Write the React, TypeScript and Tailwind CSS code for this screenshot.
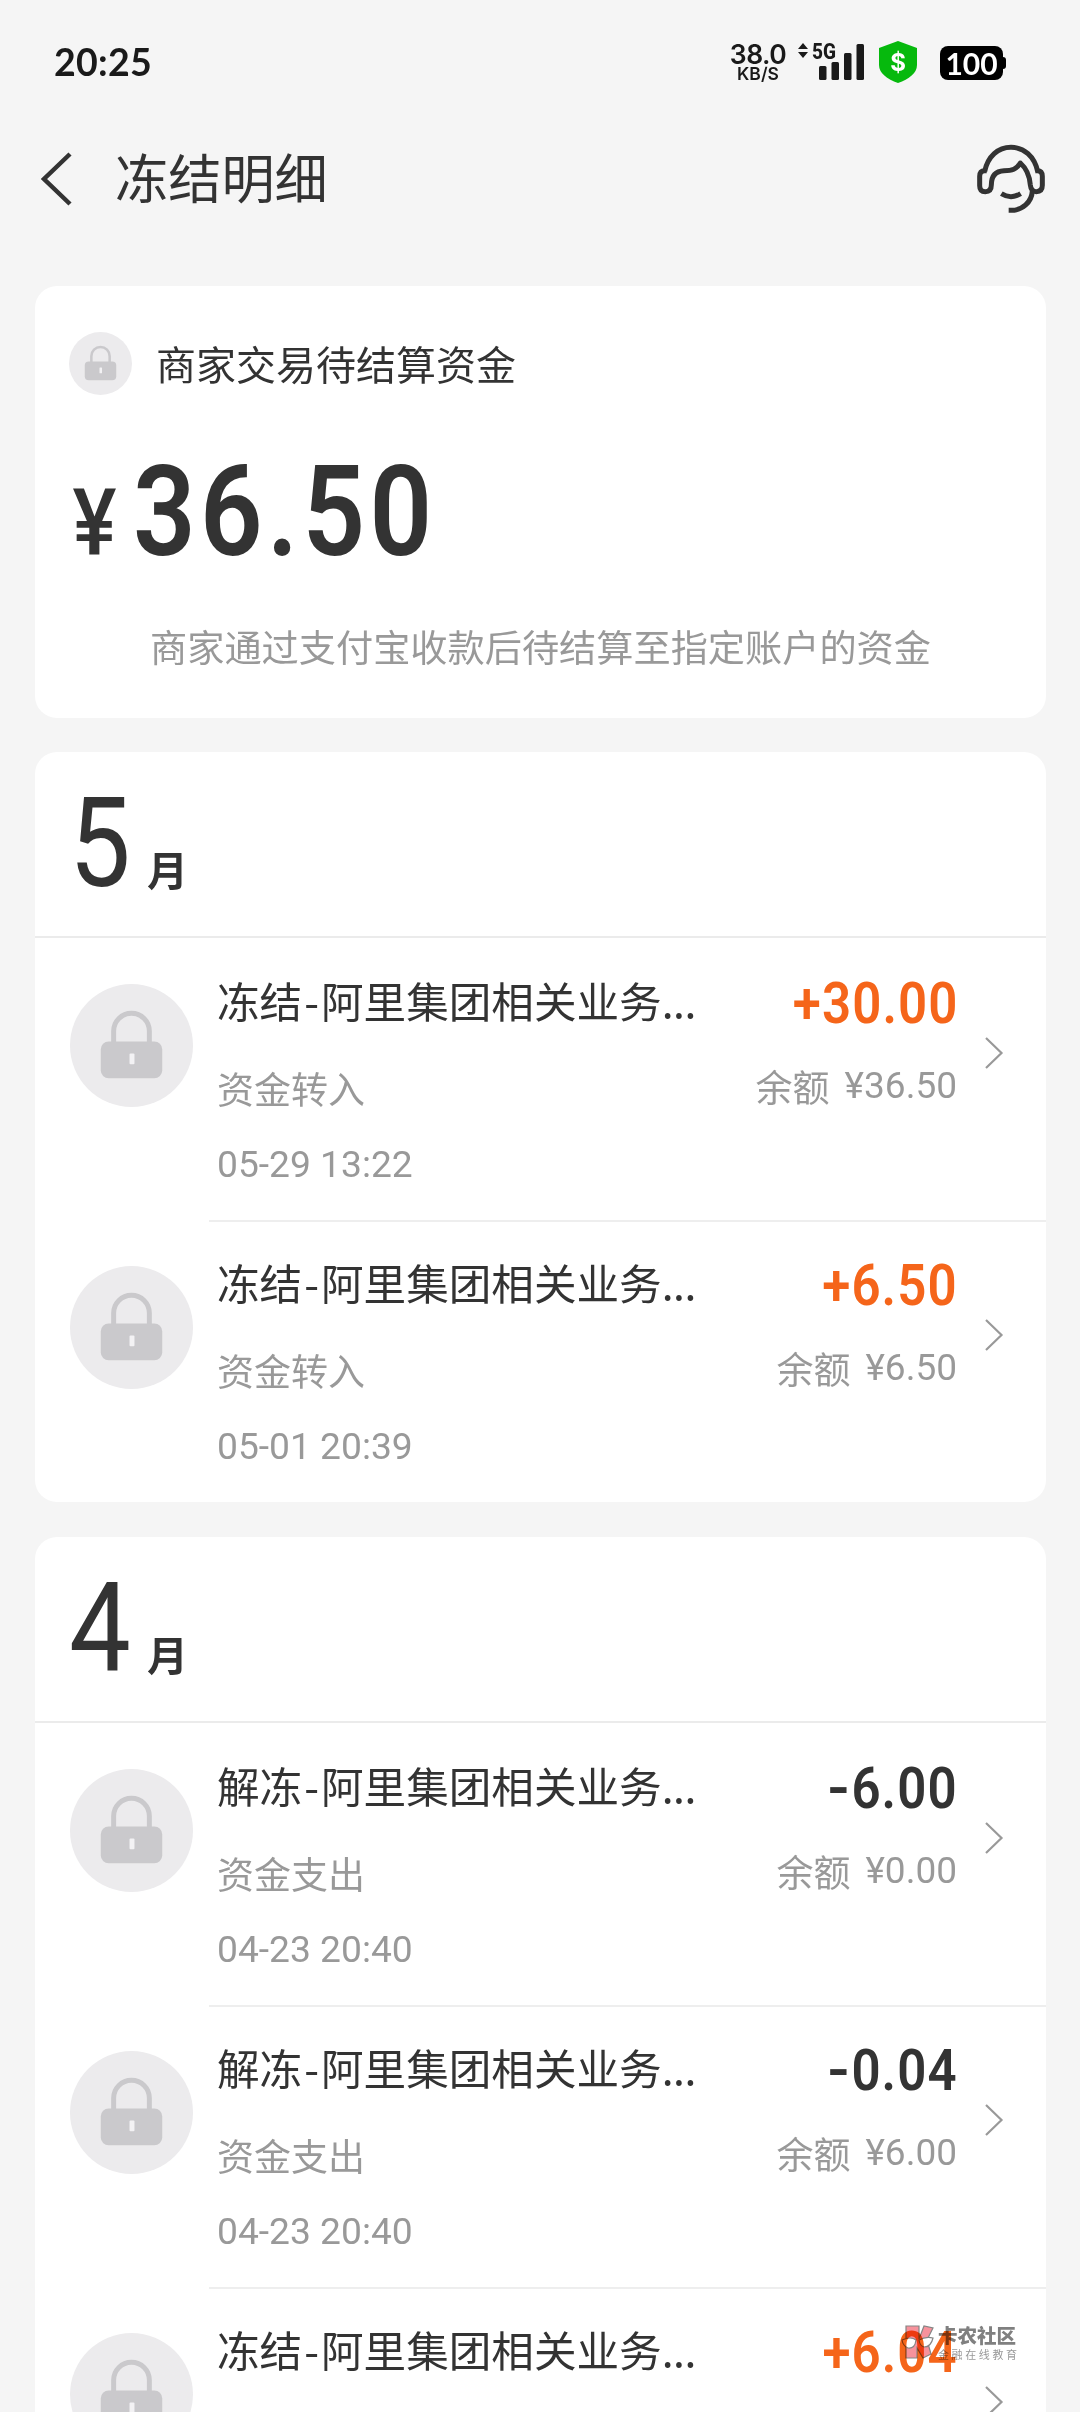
interface Transaction {
  action: string;
  kind: string;
  time: string;
  amount: string;
  balance: string;
}

interface MonthGroup {
  month: string;
  items: Transaction[];
}

const groups: MonthGroup[] = [
  {
    month: "5",
    items: [
      { action: "冻结", kind: "资金转入", time: "05-29 13:22", amount: "+30.00", balance: "36.50" },
      { action: "冻结", kind: "资金转入", time: "05-01 20:39", amount: "+6.50", balance: "6.50" },
    ],
  },
  {
    month: "4",
    items: [
      { action: "解冻", kind: "资金支出", time: "04-23 20:40", amount: "-6.00", balance: "0.00" },
      { action: "解冻", kind: "资金支出", time: "04-23 20:40", amount: "-0.04", balance: "6.00" },
      { action: "冻结", kind: "", time: "", amount: "+6.04", balance: "" },
    ],
  },
];

function LockIcon({ className }: { className: string }) {
  return (
    <svg viewBox="0 0 124 124" className={className} fill="none">
      <circle cx="62" cy="62" r="62" fill="#ecebed" />
      <path d="M44 62V47.5a18 18 0 0 1 36 0V62" stroke="#cac9cc" strokeWidth="5" />
      <rect x="31" y="58" width="62" height="37" rx="8" fill="#cac9cc" />
      <rect x="60" y="70" width="5" height="11" rx="1" fill="#f3f2f4" />
    </svg>
  );
}

function HeadsetIcon() {
  return (
    <svg viewBox="825 370 216 216" className="h-[72px] w-[72px]" fill="none" stroke="#333" strokeWidth="15">
      <path d="M854 455C864 410 894 383 933 383s70 27 80 72" />
      <path d="M860 453h-6q-15 0-15 17v28q0 18 17 18 18 0 18-20c0-26 12-42 38-43 24 0 38-4 49-23 18 16 28 40 30 66q2 20 18 20 18 0 18-19v-27q0-17-15-17h-6" strokeLinejoin="round" />
      <path d="M904 522q29 18 58 0" />
      <path d="M997 514c-2 34-30 58-64 58h-7" />
    </svg>
  );
}

function StatusBar() {
  return (
    <div className="flex h-[124px] items-start justify-between pl-[54px] pr-[74px] pt-[38px] text-[#1a1a1a]">
      <span className="font-['Lato'] text-[37.500px] font-bold leading-[48px] tracking-[0.3px]">20:25</span>
      <div className="flex items-start">
        <div className="mt-[2px] flex w-[58px] flex-col items-center font-['Inter'] font-semibold">
          <span className="text-[26.500px] leading-[28px] tracking-[-0.5px]">38.0</span>
          <span className="text-[17.500px] leading-[12px]">KB/S</span>
        </div>
        <svg viewBox="0 0 70 40" className="ml-[9px] mt-[3px] h-10 w-[70px]" fill="#1a1a1a">
          <path d="M7 2l5 6H2zM7 17l5-6H2z" />
          <text x="16" y="17.500" fontFamily="Roboto" fontWeight="800" fontSize="22.500" textLength="24" lengthAdjust="spacingAndGlyphs">5G</text>
          <rect x="23" y="25" width="7.500" height="14" rx="1.500" />
          <rect x="35.500" y="21" width="7.500" height="18" rx="1.500" />
          <rect x="48" y="12" width="7.500" height="27" rx="1.500" />
          <rect x="60.500" y="3" width="7.500" height="36" rx="1.500" />
        </svg>
        <svg viewBox="0 0 38 42" className="ml-[13px] mt-[3px] h-[42px] w-[38px]">
          <path d="M19 0l19 7v17c0 8-8 14-19 18C8 38 0 32 0 24V7z" fill="#06b90d" />
          <text x="19" y="30" textAnchor="middle" fontFamily="Inter" fontWeight="700" fontSize="24" fill="#fff">$</text>
        </svg>
        <div className="ml-[23px] mt-2 flex items-center">
          <div className="flex h-[34px] w-[63px] items-center justify-center rounded-[8px] bg-black font-['Lato'] text-[30px] font-bold leading-[34px] text-white">
            100
          </div>
          <div className="h-3 w-[3px] rounded-r bg-black" />
        </div>
      </div>
    </div>
  );
}

function Header() {
  return (
    <div className="flex h-[162px] items-start justify-between pl-[41px] pr-[33px]">
      <div className="flex items-start pt-[20px]">
        <svg viewBox="0 0 32 54" className="mt-2 h-[54px] w-8" fill="none" stroke="#333" strokeWidth="4.500">
          <path d="M29 2L3 27l26 25" />
        </svg>
        <h1 className="-mt-[3px] ml-[42px] text-[53.200px] leading-[70px]">冻结明细</h1>
      </div>
      <div className="pt-[19px]">
        <HeadsetIcon />
      </div>
    </div>
  );
}

function SummaryCard() {
  return (
    <section className="h-[432px] rounded-[22px] bg-white px-[34px] pt-[46px]">
      <div className="flex items-center">
        <LockIcon className="h-[63px] w-[63px]" />
        <span className="ml-[24px] text-[40px] leading-[63px]">商家交易待结算资金</span>
      </div>
      <div className="mt-[47px] flex items-baseline font-['Roboto']">
        <span className="w-[64px] origin-left scale-x-[0.9] pl-1 text-[92px] font-medium leading-[140px]">¥</span>
        <span className="origin-left scale-x-[0.87] text-[126px] font-semibold leading-[140px] tracking-[5px]">36.50</span>
      </div>
      <p className="mt-[27px] text-center text-[37.200px] leading-[50px] text-[#999]">
        商家通过支付宝收款后待结算至指定账户的资金
      </p>
    </section>
  );
}

function Amount({ value }: { value: string }) {
  const income = value.startsWith("+");
  return (
    <p
      className={`-mr-px origin-right scale-x-[0.88] font-['Roboto'] text-[58px] font-semibold leading-[64px] tracking-[1.200px] ${
        income ? "text-[#f5651a]" : ""
      }`}
    >
      <span className={income ? "" : "inline-block origin-right scale-x-[1.2]"}>{value[0]}</span>
      {value.slice(1)}
    </p>
  );
}

function TransactionRow({ item, last }: { item: Transaction; last: boolean }) {
  return (
    <div className={`flex pl-[35px] ${last ? "h-[280px]" : "h-[282px]"}`}>
      <LockIcon className="mt-[44px] h-[123px] w-[123px] shrink-0" />
      <div className={`ml-4 flex flex-1 pl-2 ${last ? "" : "border-b-2 border-[#eee]"}`}>
        <div className="flex-1 pt-[28px]">
          <p className="whitespace-nowrap text-[42.600px] leading-[64px]">
            {item.action}
            <span className="mx-[2px]">-</span>
            阿里集团相关业务
            <span className="tracking-[-0.500px]">...</span>
          </p>
          <p className="mt-[28px] text-[37px] leading-[56px] text-[#999]">{item.kind}</p>
          <p className="mt-5 font-['Roboto'] text-[37.200px] leading-[56px] text-[#999]">{item.time}</p>
        </div>
        <div className="pt-[31px] text-right">
          <Amount value={item.amount} />
          {item.balance && (
            <p className="mt-[23px] flex items-center justify-end text-[37px] leading-[56px] text-[#999]">
              余额<span className="ml-[15px] font-['Roboto']">¥{item.balance}</span>
            </p>
          )}
        </div>
        <svg viewBox="0 0 20 32" className="ml-[27px] mr-[42px] mt-[97px] h-8 w-5" fill="none" stroke="#999" strokeWidth="2.200">
          <path d="M2 1l15.500 15L2 31" />
        </svg>
      </div>
    </div>
  );
}

function MonthCard({ group }: { group: MonthGroup }) {
  return (
    <section className="mb-px rounded-[22px] bg-white">
      <div className="mb-[2px] flex h-[186px] items-baseline border-b-2 border-[#ebebeb] pl-[34px] pt-[22px]">
        <span className="w-[78px] origin-left scale-x-[0.88] font-['Roboto'] text-[125px] leading-[140px]">
          {group.month}
        </span>
        <span className="text-[41px] font-bold">月</span>
      </div>
      {group.items.map((item, i) => (
        <TransactionRow key={i} item={item} last={i === group.items.length - 1} />
      ))}
    </section>
  );
}

function Watermark() {
  return (
    <div className="absolute left-[900px] top-[2324px] flex mix-blend-multiply">
      <svg viewBox="0 0 36 36" className="h-9 w-9" stroke="#858585" strokeWidth="1.200">
        <path d="M6 2h13v13l5-13 9 2-6 12 4 14-8 4-6-10v10H6V22l6-4-6-4z" fill="#f7929c" />
        <path d="M2 16q9-4 14 0-1 9-8 8-5-2-6-8zM19 16q7-4 14-2-2 9-9 9-4-1-5-7z" fill="#fff" />
      </svg>
      <div className="ml-[2px]">
        <p className="text-[19.500px] font-black leading-[22px] text-[#808080]">卡农社区</p>
        <p className="mt-[2px] whitespace-nowrap text-[11px] leading-[13px] tracking-[2.600px] text-[#999]">金融在线教育</p>
      </div>
    </div>
  );
}

export default function App() {
  return (
    <div className="relative h-[2412px] w-[1080px] overflow-hidden bg-[#f5f5f5] font-['Noto_Sans_CJK_SC',sans-serif] text-[#333]">
      <StatusBar />
      <Header />
      <main className="flex flex-col gap-[34px] pl-[35px] pr-[34px]">
        <SummaryCard />
        {groups.map((group) => (
          <MonthCard key={group.month} group={group} />
        ))}
      </main>
      <Watermark />
    </div>
  );
}
